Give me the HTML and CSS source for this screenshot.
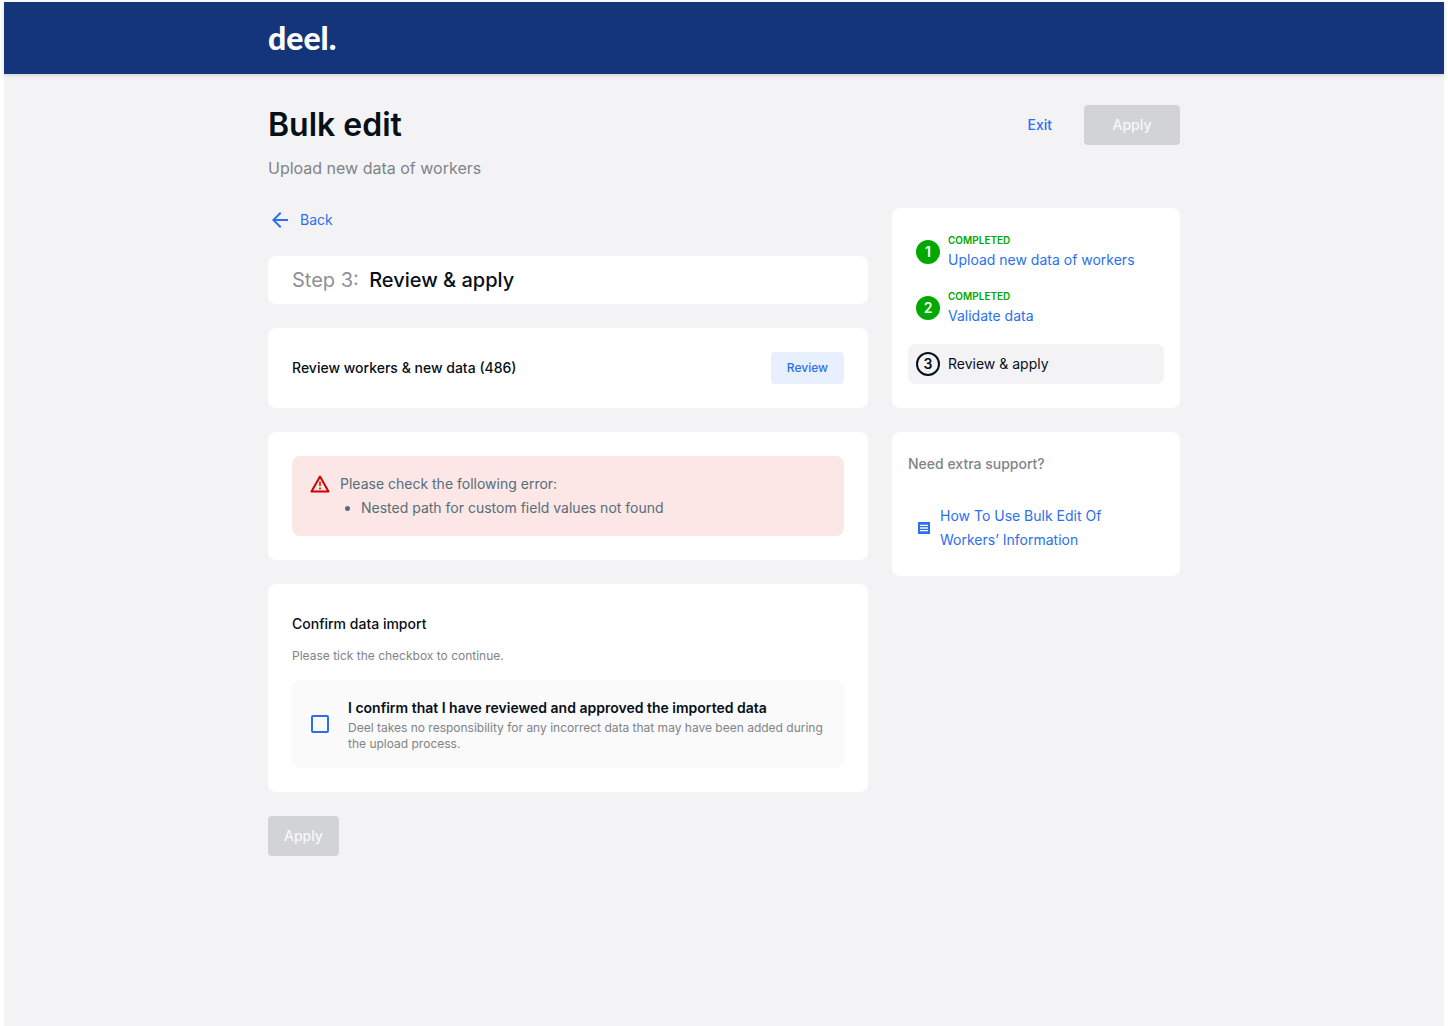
FILE: index.html
```html
<!DOCTYPE html>
<html lang="en">
<head>
  <meta charset="UTF-8" />
  <meta name="viewport" content="width=device-width, initial-scale=1" />
  <title>Bulk edit</title>
  <link rel="stylesheet" href="styles.css">
</head>
<body>
  <div class="page">
    <header class="topbar">
      <div class="container">
        <a class="logo" href="#">deel.</a>
      </div>
    </header>

    <div class="container">
      <div class="page-head">
        <h1>Bulk edit</h1>
        <div class="actions">
          <button class="btn btn-text" type="button">Exit</button>
          <button class="btn btn-apply btn-wide" type="button" disabled>Apply</button>
        </div>
      </div>
      <p class="subtitle">Upload new data of workers</p>

      <div class="columns">
        <main class="stack">
          <a class="back" href="#">
            <svg width="24" height="24" viewBox="0 0 24 24" fill="currentColor">
              <path d="M20 11H7.830l5.590-5.590L12 4l-8 8 8 8 1.410-1.410L7.830 13H20v-2z" />
            </svg>
            Back
          </a>

          <section class="card step-title">
            <h2><span>Step 3:</span> Review &amp; apply</h2>
          </section>

          <section class="card review">
            <h3>Review workers &amp; new data (486)</h3>
            <button class="btn btn-review" type="button">Review</button>
          </section>

          <section class="card">
            <div class="alert" role="alert">
              <svg width="24" height="24" viewBox="0 0 24 24" fill="none" stroke="currentColor" stroke-width="2" stroke-linejoin="round">
                <path d="M12 4.500L20.500 19.500H3.500z" />
                <path d="M12 9.500v4.500M12 15.500v2" stroke-width="1.500" />
              </svg>
              <div>
                <p>Please check the following error:</p>
                <ul>
                  <li>Nested path for custom field values not found</li>
                </ul>
              </div>
            </div>
          </section>

          <section class="card confirm">
            <h3>Confirm data import</h3>
            <p class="hint">Please tick the checkbox to continue.</p>
            <div class="confirm-box">
              <input type="checkbox" id="confirmCheck">
              <label for="confirmCheck">
                <strong>I confirm that I have reviewed and approved the imported data</strong>
                <span>Deel takes no responsibility for any incorrect data that may have been added during the upload process.</span>
              </label>
            </div>
          </section>

          <button class="btn btn-apply" type="button" disabled>Apply</button>
        </main>

        <aside class="stack">
          <!-- Progress -->
          <ol class="card steps">
            <li class="done">
              <span class="num">1</span>
              <div>
                <small>Completed</small>
                <a href="#">Upload new data of workers</a>
              </div>
            </li>
            <li class="done">
              <span class="num">2</span>
              <div>
                <small>Completed</small>
                <a href="#">Validate data</a>
              </div>
            </li>
            <li class="current">
              <span class="num">3</span>
              Review &amp; apply
            </li>
          </ol>

          <section class="card support">
            <h4>Need extra support?</h4>
            <a href="#">
              <svg width="16" height="16" viewBox="0 0 16 16">
                <path fill="currentColor" d="M2 2h12v12H2z" />
                <path stroke="#fff" stroke-width="1.300" d="M4 5.300h8M4 8h8M4 10.700h8" />
              </svg>
              <span>How To Use Bulk Edit Of Workers’ Information</span>
            </a>
          </section>
        </aside>
      </div>
    </div>
  </div>
</body>
</html>
```

FILE: styles.css
```css
* {
  box-sizing: border-box;
}

body {
  margin: 0;
  padding: 2px 4px 0;
  background: #fff;
  color: #070f17;
  font-family: Inter, "Liberation Sans", sans-serif;
  font-size: 14px;
  line-height: 24px;
}

h1, h2, h3, h4, p, ul, ol {
  margin: 0;
  padding: 0;
}

a {
  color: #2b6fed;
  text-decoration: none;
}

svg {
  flex: none;
}

.page {
  min-height: calc(100vh - 2px);
  padding-bottom: 24px;
  background: #f3f3f5;
}

.container {
  max-width: 960px;
  margin: 0 auto;
  padding: 0 24px;
}

.topbar {
  background: #15357a;
  box-shadow: 0 1px 4px rgba(0, 0, 0, 0.15);
}

.topbar .container {
  display: flex;
  align-items: center;
  height: 72px;
}

.logo {
  color: #fff;
  font-family: Lato, sans-serif;
  font-size: 32px;
  font-weight: 900;
}

.page-head {
  display: flex;
  justify-content: space-between;
  align-items: center;
  margin-top: 30px;
}

h1 {
  font-size: 32px;
  font-weight: 600;
  line-height: 42px;
}

.actions {
  display: flex;
  gap: 16px;
}

.subtitle {
  margin-top: 10px;
  color: #7f8487;
  font-size: 16px;
}

/* Buttons */
.btn {
  height: 40px;
  padding: 0 16px 2px;
  border: none;
  border-radius: 4px;
  font-family: inherit;
  font-size: 14px;
  font-weight: 500;
  cursor: pointer;
}

.btn-text {
  background: none;
  color: #2b6fed;
}

.btn-apply {
  align-self: flex-start;
  background: #d1d3d5;
  color: #f8f8f9;
  cursor: default;
}

.btn-wide {
  width: 96px;
}

.btn-review {
  height: 32px;
  background: #e9f0fd;
  color: #2b6fed;
  font-size: 12px;
}

/* Layout */
.columns {
  display: grid;
  grid-template-columns: minmax(0, 1fr) 288px;
  align-items: start;
  gap: 24px;
  margin-top: 28px;
}

.stack {
  display: flex;
  flex-direction: column;
  gap: 24px;
}

.card {
  padding: 24px;
  background: #fff;
  border-radius: 8px;
}

.back {
  display: flex;
  align-self: flex-start;
  gap: 8px;
}

.step-title {
  padding: 12px 24px;
}

h2 {
  font-size: 20px;
  font-weight: 500;
}

h2 span {
  margin-right: 5px;
  color: #8d9194;
  font-weight: 400;
}

h3 {
  font-size: 14px;
  font-weight: 500;
}

.review {
  display: flex;
  justify-content: space-between;
  align-items: center;
}

.alert {
  display: flex;
  gap: 8px;
  padding: 16px;
  background: #fce6e6;
  border-radius: 8px;
  color: #546e7a;
}

.alert svg {
  color: #cd0000;
}

.alert ul {
  padding-left: 21px;
}

.confirm h3 {
  margin-top: 4px;
}

.hint {
  margin-top: 8px;
  color: #7f8487;
  font-size: 12px;
}

.confirm-box {
  display: flex;
  align-items: center;
  gap: 19px;
  margin-top: 12px;
  padding: 16px 19px;
  background: #fafafa;
  border-radius: 8px;
}

.confirm-box input {
  flex: none;
  appearance: none;
  width: 18px;
  height: 18px;
  margin: 0;
  border: 2px solid #2b6fed;
  border-radius: 2px;
}

.confirm-box input:checked {
  background: #2b6fed;
}

.confirm-box strong {
  display: block;
  font-weight: 600;
}

.confirm-box span {
  display: block;
  color: #7f8487;
  font-size: 12px;
  line-height: 16px;
}

/* Sidebar */
.steps {
  display: grid;
  gap: 16px;
  padding: 24px 16px;
  list-style: none;
}

.steps li {
  display: flex;
  align-items: center;
  gap: 8px;
  padding: 0 8px;
}

.steps small {
  display: block;
  color: #00a800;
  font-size: 10px;
  font-weight: 600;
  line-height: 16px;
  text-transform: uppercase;
}

.steps a {
  display: block;
}

.num {
  width: 24px;
  height: 24px;
  border: 2px solid #070f17;
  border-radius: 50%;
  font-weight: 600;
  line-height: 20px;
  text-align: center;
}

.done .num {
  border-color: #00a800;
  background: #00a800;
  color: #fff;
}

.steps .current {
  padding: 8px;
  background: #f3f3f5;
  border-radius: 8px;
}

.support {
  padding: 20px 16px 24px;
}

h4 {
  color: #7f8487;
  font-size: 14px;
  font-weight: 500;
}

.support a {
  display: flex;
  align-items: center;
  gap: 8px;
  max-width: 208px;
  margin-top: 28px;
  padding-left: 8px;
}
```
